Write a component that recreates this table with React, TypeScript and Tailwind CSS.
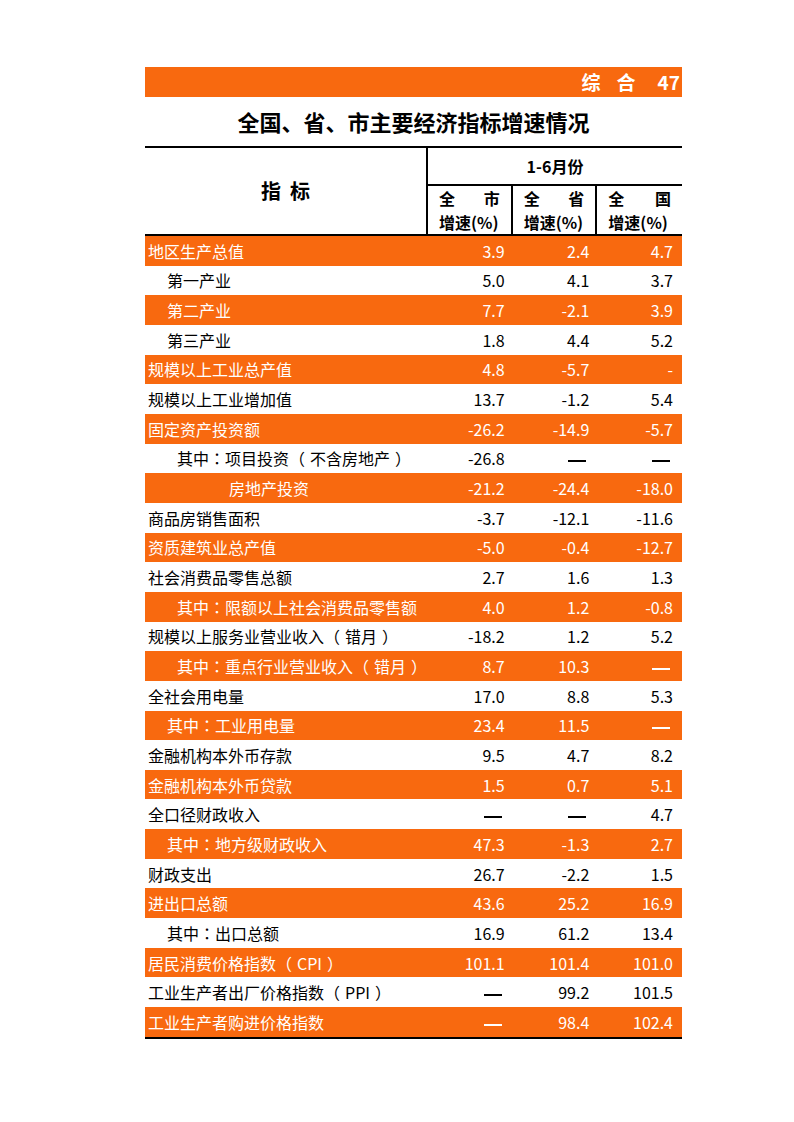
type Row = {
  name: string;
  city: string;
  prov: string;
  nation: string;
  hl?: boolean;
  indent?: 0 | 1 | 2 | 3;
};

const rows: Row[] = [
  { name: "地区生产总值", city: "3.9", prov: "2.4", nation: "4.7", hl: true },
  { name: "第一产业", city: "5.0", prov: "4.1", nation: "3.7", indent: 1 },
  { name: "第二产业", city: "7.7", prov: "-2.1", nation: "3.9", hl: true, indent: 1 },
  { name: "第三产业", city: "1.8", prov: "4.4", nation: "5.2", indent: 1 },
  { name: "规模以上工业总产值", city: "4.8", prov: "-5.7", nation: "-", hl: true },
  { name: "规模以上工业增加值", city: "13.7", prov: "-1.2", nation: "5.4" },
  { name: "固定资产投资额", city: "-26.2", prov: "-14.9", nation: "-5.7", hl: true },
  { name: "其中：项目投资（不含房地产）", city: "-26.8", prov: "—", nation: "—", indent: 2 },
  { name: "房地产投资", city: "-21.2", prov: "-24.4", nation: "-18.0", hl: true, indent: 3 },
  { name: "商品房销售面积", city: "-3.7", prov: "-12.1", nation: "-11.6" },
  { name: "资质建筑业总产值", city: "-5.0", prov: "-0.4", nation: "-12.7", hl: true },
  { name: "社会消费品零售总额", city: "2.7", prov: "1.6", nation: "1.3" },
  { name: "其中：限额以上社会消费品零售额", city: "4.0", prov: "1.2", nation: "-0.8", hl: true, indent: 2 },
  { name: "规模以上服务业营业收入（错月）", city: "-18.2", prov: "1.2", nation: "5.2" },
  { name: "其中：重点行业营业收入（错月）", city: "8.7", prov: "10.3", nation: "—", hl: true, indent: 2 },
  { name: "全社会用电量", city: "17.0", prov: "8.8", nation: "5.3" },
  { name: "其中：工业用电量", city: "23.4", prov: "11.5", nation: "—", hl: true, indent: 1 },
  { name: "金融机构本外币存款", city: "9.5", prov: "4.7", nation: "8.2" },
  { name: "金融机构本外币贷款", city: "1.5", prov: "0.7", nation: "5.1", hl: true },
  { name: "全口径财政收入", city: "—", prov: "—", nation: "4.7" },
  { name: "其中：地方级财政收入", city: "47.3", prov: "-1.3", nation: "2.7", hl: true, indent: 1 },
  { name: "财政支出", city: "26.7", prov: "-2.2", nation: "1.5" },
  { name: "进出口总额", city: "43.6", prov: "25.2", nation: "16.9", hl: true },
  { name: "其中：出口总额", city: "16.9", prov: "61.2", nation: "13.4", indent: 1 },
  { name: "居民消费价格指数（CPI）", city: "101.1", prov: "101.4", nation: "101.0", hl: true },
  { name: "工业生产者出厂价格指数（PPI）", city: "—", prov: "99.2", nation: "101.5" },
  { name: "工业生产者购进价格指数", city: "—", prov: "98.4", nation: "102.4", hl: true },
];

const indentClass = ["pl-[3px]", "pl-[22px]", "pl-[32px]", "pl-[84px]"];

const tcFont = { fontFamily: '"Noto Sans CJK TC", sans-serif' };

// full-width colon centred (TC cut); brackets get some air on the inside,
// as in the source sheet
const Label = ({ text }: { text: string }) => (
  <>
    {text.split(/([：（）])/).map((part, i) => {
      if (part === "：")
        return (
          <span key={i} style={tcFont}>
            {part}
          </span>
        );
      if (part === "（")
        return (
          <span key={i} style={tcFont} className="pr-[5px]">
            {part}
          </span>
        );
      if (part === "）")
        return (
          <span key={i} style={tcFont} className="pl-[5px]">
            {part}
          </span>
        );
      return <span key={i}>{part}</span>;
    })}
  </>
);

const Num = ({ v, pr }: { v: string; pr: string }) => (
  <div className={`text-right ${pr}`}>
    {v === "—" ? (
      <span className="inline-block w-[18px] h-[2px] bg-current align-middle mr-[3px]" aria-label="—" />
    ) : (
      v
    )}
  </div>
);

const SubHead = ({ label, last }: { label: string; last?: boolean }) => (
  <div
    className={`h-[48px] px-[11px] flex flex-col justify-center leading-[24px] whitespace-nowrap ${
      last ? "" : "border-r-2 border-black"
    }`}
  >
    <div className="flex justify-between">
      <span>全</span>
      <span>{label}</span>
    </div>
    <div>增速(%)</div>
  </div>
);

export default function App() {
  return (
    <div
      className="min-h-[1122px] bg-white pt-[67px] text-black"
      style={{ fontFamily: '"Noto Sans CJK SC", "Noto Sans", sans-serif' }}
    >
      <div className="ml-[145px] w-[537px]">
        {/* section tag */}
        <div className="h-[30px] bg-[#f8690f] flex items-center justify-end pr-[2px] text-white font-bold text-[19px]">
          <span>综</span>
          <span className="ml-[16px]">合</span>
          <span className="ml-[22px]">47</span>
        </div>

        <h1 className="h-[49px] flex items-center justify-center text-[22px] font-bold">
          全国、省、市主要经济指标增速情况
        </h1>

        {/* table header */}
        <div className="border-t-2 border-black grid grid-cols-[283px_repeat(3,minmax(0,1fr))] font-bold text-[16px]">
          <div className="row-span-2 border-r-2 border-black flex items-center justify-center gap-[9px] text-[20px]">
            <span>指</span>
            <span>标</span>
          </div>
          <div className="col-span-3 h-[38px] border-b-2 border-black flex items-center justify-center whitespace-nowrap">
            1-6月份
          </div>
          <SubHead label="市" />
          <SubHead label="省" />
          <SubHead label="国" last />
        </div>

        {/* rows */}
        <div className="border-t-2 border-b-2 border-black text-[16px]">
          {rows.map((r) => (
            <div
              key={r.name}
              className={`h-[29.67px] grid grid-cols-[283px_repeat(3,minmax(0,1fr))] items-center ${
                r.hl ? "bg-[#f8690f] text-white" : ""
              }`}
            >
              <div className={`whitespace-nowrap ${indentClass[r.indent ?? 0]}`}>
                <Label text={r.name} />
              </div>
              <Num v={r.city} pr="pr-[8px]" />
              <Num v={r.prov} pr="pr-[8px]" />
              <Num v={r.nation} pr="pr-[9px]" />
            </div>
          ))}
        </div>
      </div>
    </div>
  );
}
